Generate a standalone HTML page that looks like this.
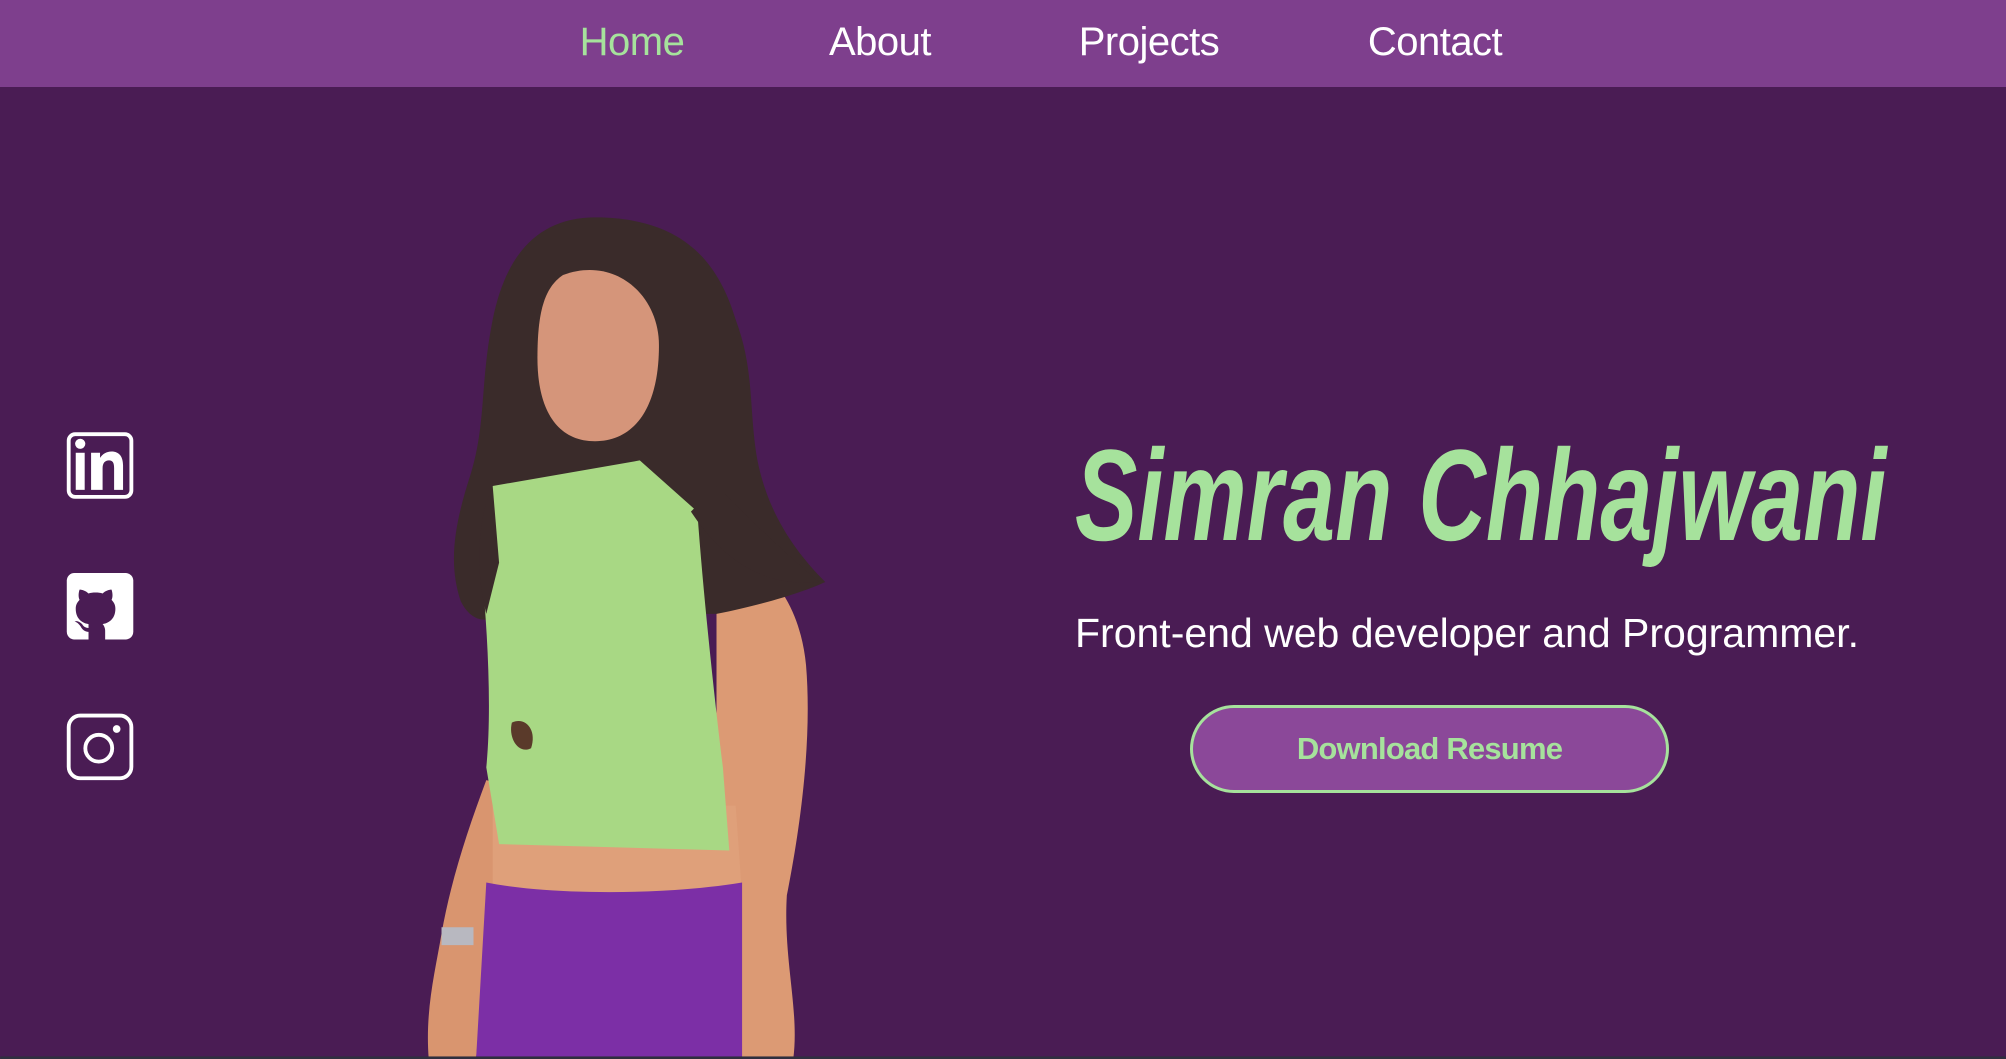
<!DOCTYPE html>
<html><head><meta charset="utf-8">
<style>
html,body{margin:0;padding:0;}
body{width:2006px;height:1059px;overflow:hidden;background:#4a1c54;position:relative;font-family:"Liberation Sans",Arial,sans-serif;}
.nav{position:absolute;left:0;top:0;width:2006px;height:87px;background:#7e3f8d;}
.nav span{position:absolute;top:20px;font-size:40px;color:#fff;transform:translateX(-50%);white-space:nowrap;letter-spacing:-0.5px}
.name{position:absolute;left:1075px;top:420px;font-size:130px;font-weight:bold;font-style:italic;color:#a6e29c;white-space:nowrap;transform-origin:0 0;transform:scaleX(0.72);line-height:150px}
.sub{position:absolute;left:1075px;top:610px;font-size:41px;color:#fff;white-space:nowrap;letter-spacing:0px}
.btn{position:absolute;left:1190px;top:705px;width:473px;height:82px;border:3px solid #a6e29c;border-radius:44px;background:#8b4899;color:#a6e29c;font-weight:bold;font-size:31px;text-align:center;line-height:82px;letter-spacing:-0.8px}
svg.art{position:absolute;left:0;top:0;}
</style></head><body>
<div class="nav">
<span style="left:632px;color:#a6e29c">Home</span>
<span style="left:880px">About</span>
<span style="left:1149px">Projects</span>
<span style="left:1435px">Contact</span>
</div>
<svg class="art" width="2006" height="1059" viewBox="0 0 1568 828">
<rect x="53.5" y="339.5" width="49" height="49" rx="5" fill="none" stroke="#fff" stroke-width="3"/>
<rect x="59" y="354" width="7" height="29" fill="#fff"/>
<circle cx="62.5" cy="347" r="4" fill="#fff"/>
<path d="M71 383V354h7v4c2-3 5-5 9-5c6 0 9 4 9 11v19h-7V366c0-4-1-6-4-6s-5 2-5 6v17z" fill="#fff"/>
<rect x="52" y="448" width="52" height="52" rx="6" fill="#fff"/>
<path d="M69 500v-6c-3 0-5-2-6-4c-2-3-4-4-5-4c2-1 4 0 6 2c1 2 3 3 5 3v-3c-6-1-10-5-10-12c0-3 1-5 3-7c-1-2-1-5 0-8c2 0 5 1 7 3c3-1 8-1 11 0c2-2 5-3 7-3c1 3 1 6 0 8c2 2 3 4 3 7c0 7-4 11-10 12c1 1 2 3 2 5v7z" fill="#4a1c54"/>
<rect x="53.5" y="559.5" width="49" height="49" rx="9" fill="none" stroke="#fff" stroke-width="3"/>
<circle cx="77" cy="585" r="10.5" fill="none" stroke="#fff" stroke-width="3"/>
<circle cx="91" cy="570" r="3" fill="#fff"/>
<path d="M418 620 C400 660 385 700 380 740 L372 828 L335 828 C332 790 340 760 345 730 C352 690 365 650 380 610 Z" fill="#d9956f"/>
<path d="M560 420 C600 440 625 470 630 520 C635 580 625 650 615 700 C612 750 625 790 620 828 L575 828 L560 600 Z" fill="#dc9a74"/>
<path d="M345 725 h25 v14 h-25z" fill="#b8b8c0"/>
<path d="M385 630 L575 630 L580 700 L385 700 Z" fill="#dfa07a"/>
<path d="M380 690 C430 700 520 700 580 690 L580 828 L372 828 Z" fill="#7c2fa6"/>
<path d="M470 170 C420 168 395 200 385 250 C375 300 380 330 368 370 C355 410 350 440 360 470 C370 490 385 485 390 480 L560 480 C600 472 630 462 645 455 C620 430 600 400 592 360 C585 320 590 290 575 250 C560 200 530 172 470 170 Z" fill="#3a2b2a"/>
<path d="M440 215 C480 200 515 230 515 270 C515 320 495 345 465 345 C435 345 420 320 420 280 C420 245 425 225 440 215 Z" fill="#d5957a"/>
<path d="M385 380 L500 360 L545 400 C550 470 560 560 565 600 L570 665 L390 660 L380 600 C385 550 380 480 375 430 Z" fill="#a8d884"/>
<path d="M400 565 c10-5 20 5 15 20 c-10 5 -18 -8 -15 -20z" fill="#5a3a2a"/>
<path d="M540 400 C560 430 590 460 640 455 C600 420 580 400 560 380 Z" fill="#3a2b2a"/>
<path d="M385 380 C375 400 370 440 380 480 L390 440 Z" fill="#3a2b2a"/>
<rect x="0" y="826" width="1568" height="2" fill="#2f2f3f"/>
</svg>
<div class="name">Simran Chhajwani</div>
<div class="sub">Front-end web developer and Programmer.</div>
<div class="btn">Download Resume</div>
</body></html>
